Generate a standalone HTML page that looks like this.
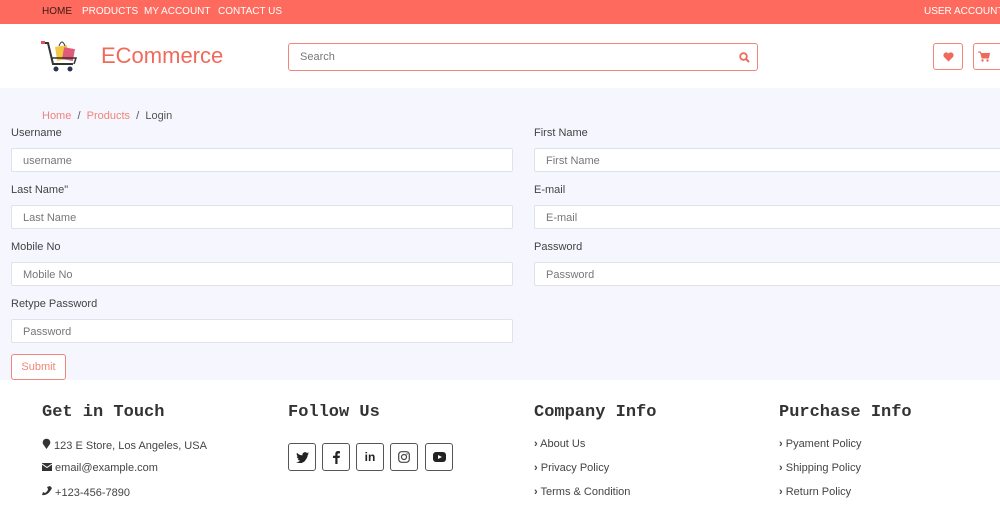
<!DOCTYPE html>
<html><head><meta charset="utf-8"><style>
*{box-sizing:border-box;margin:0;padding:0}
body{width:1000px;height:506px;overflow:hidden;font-family:"Liberation Sans",sans-serif;background:#fff;color:#444;position:relative}
.a{position:absolute;white-space:nowrap}
.top{left:0;top:0;width:1000px;height:24px;background:#fe6b5e}
.top span{position:absolute;top:6px;font-size:10px;color:#fff;white-space:nowrap}
.hdr{left:0;top:24px;width:1000px;height:64px;background:#fff}
.form{left:0;top:88px;width:1000px;height:292px;background:#f5f6fe}
.lbl{font-size:11px;color:#444}
.inp{height:24px;background:#fff;border:1px solid #dfe2ea;border-radius:2px;font-size:11px;color:#777;padding:6px 0 0 11px}
.ft h3{position:absolute;top:403px;font-family:"Liberation Mono",monospace;font-weight:bold;font-size:17px;color:#333}
.fi{font-size:11px;color:#444}
.sb{width:28px;height:28px;border:1px solid #555;border-radius:3px;top:443px;display:flex;align-items:center;justify-content:center}
</style></head><body>
<div class="a top">
<span style="left:42px;color:#3a1a16">HOME</span>
<span style="left:82px">PRODUCTS</span>
<span style="left:144px">MY ACCOUNT</span>
<span style="left:218px">CONTACT US</span>
<span style="left:924px">USER ACCOUNT</span>
</div>
<div class="a hdr"></div>
<svg class="a" style="left:41px;top:36px" width="42" height="42" viewBox="0 0 42 42">
<path d="M1 7 L7 7 L12 28 L32 28" stroke="#333" stroke-width="2" fill="none"/>
<rect x="0" y="5" width="4" height="3" fill="#e0505a"/>
<rect x="15" y="10" width="12" height="14" fill="#f3c845" transform="rotate(-8 21 17)"/>
<path d="M18 10 q3 -8 6 0" stroke="#333" fill="none"/>
<rect x="22" y="12" width="11" height="12" fill="#e05a7a" transform="rotate(10 27 18)"/>
<path d="M10 22 L35 22 L33 28" stroke="#333" stroke-width="1.5" fill="none"/>
<circle cx="15" cy="33" r="2.5" fill="#2b3550"/><circle cx="29" cy="33" r="2.5" fill="#2b3550"/>
</svg>
<div class="a" style="left:101px;top:43px;font-size:22px;color:#f06a5c">ECommerce</div>
<div class="a" style="left:288px;top:43px;width:470px;height:28px;border:1px solid #f0867b;border-radius:3px;background:#fff">
<span style="position:absolute;left:11px;top:7px;font-size:11px;color:#777">Search</span>
<svg style="position:absolute;right:7px;top:8px" width="11" height="11" viewBox="0 0 11 11"><circle cx="4.5" cy="4.5" r="3.3" stroke="#f06a5c" stroke-width="1.8" fill="none"/><path d="M7 7 L10 10" stroke="#f06a5c" stroke-width="2"/></svg>
</div>
<div class="a" style="left:933px;top:43px;width:30px;height:27px;border:1px solid #f0867b;border-radius:3px;background:#fff;display:flex;align-items:center;justify-content:center">
<svg width="11" height="10" viewBox="0 0 11 10"><path d="M5.5 9.5 L1 5 A2.5 2.5 0 0 1 5.5 1.5 A2.5 2.5 0 0 1 10 5 Z" fill="#f06a5c"/></svg></div>
<div class="a" style="left:973px;top:43px;width:30px;height:27px;border:1px solid #f0867b;border-radius:3px;background:#fff;display:flex;align-items:center;justify-content:center;padding-right:8px">
<svg width="12" height="11" viewBox="0 0 12 11"><path d="M0 1 H2.5 L4 7 H10.5 L11.5 2.5 H3" fill="#f06a5c" stroke="#f06a5c"/><circle cx="4.5" cy="9.5" r="1.2" fill="#f06a5c"/><circle cx="9.5" cy="9.5" r="1.2" fill="#f06a5c"/></svg></div>

<div class="a form"></div>
<div class="a" style="left:42px;top:110px;font-size:11px;color:#555"><span style="color:#f0857a">Home</span> &nbsp;/&nbsp; <span style="color:#f0857a">Products</span> &nbsp;/&nbsp; Login</div>

<div class="a lbl" style="left:11px;top:127px">Username</div>
<div class="a inp" style="left:11px;top:148px;width:502px">username</div>
<div class="a lbl" style="left:11px;top:184px">Last Name"</div>
<div class="a inp" style="left:11px;top:205px;width:502px">Last Name</div>
<div class="a lbl" style="left:11px;top:241px">Mobile No</div>
<div class="a inp" style="left:11px;top:262px;width:502px">Mobile No</div>
<div class="a lbl" style="left:11px;top:298px">Retype Password</div>
<div class="a inp" style="left:11px;top:319px;width:502px">Password</div>

<div class="a lbl" style="left:534px;top:127px">First Name</div>
<div class="a inp" style="left:534px;top:148px;width:480px">First Name</div>
<div class="a lbl" style="left:534px;top:184px">E-mail</div>
<div class="a inp" style="left:534px;top:205px;width:480px">E-mail</div>
<div class="a lbl" style="left:534px;top:241px">Password</div>
<div class="a inp" style="left:534px;top:262px;width:480px">Password</div>

<div class="a" style="left:11px;top:354px;width:55px;height:26px;border:1px solid #f0867b;border-radius:3px;background:#fff;font-size:11px;color:#f0857a;text-align:center;padding-top:6px">Submit</div>

<div class="ft">
<h3 style="left:42px">Get in Touch</h3>
<h3 style="left:288px">Follow Us</h3>
<h3 style="left:534px">Company Info</h3>
<h3 style="left:779px">Purchase Info</h3>
</div>
<div class="a fi" style="left:42px;top:438px">
<svg width="9" height="11" viewBox="0 0 9 11"><path d="M4.5 11 L1 6 A3.8 3.8 0 1 1 8 6 Z" fill="#333"/></svg> 123 E Store, Los Angeles, USA</div>
<div class="a fi" style="left:42px;top:462px">
<svg width="10" height="8" viewBox="0 0 10 8"><rect width="10" height="8" fill="#333"/><path d="M0 1 L5 4.5 L10 1" stroke="#fff" fill="none"/></svg> email@example.com</div>
<div class="a fi" style="left:42px;top:486px">
<svg width="10" height="10" viewBox="0 0 10 10"><path d="M8 0 L10 2 Q6 10 0 9 L1 6 L3 7 Q6 5 6 3 L5 1 Z" fill="#333"/></svg> +123-456-7890</div>

<div class="a sb" style="left:288px"><svg width="13" height="11" viewBox="0 0 13 11"><path d="M13 1.3 Q12 2 11.5 2 Q12.5 1 12.7 0.3 Q11.8 0.8 11 1 A2.7 2.7 0 0 0 6.4 3.4 Q3 3.3 1 0.8 Q0 3 2 4.5 Q1.3 4.5 0.8 4.2 Q0.9 6.3 3 6.8 Q2.3 7 1.7 6.9 Q2.3 8.6 4.2 8.7 Q2 10.3 0 10 Q8 14 11.7 4 L11.7 3 Q12.5 2.3 13 1.3Z" fill="#222"/></svg></div>
<div class="a sb" style="left:322px"><svg width="7" height="13" viewBox="0 0 7 13"><path d="M4.5 13 V7 H6.5 L7 4.7 H4.5 V3.3 Q4.5 2.4 5.5 2.4 H7 V0.3 Q6 0 5 0 Q2.3 0 2.3 3 V4.7 H0 V7 H2.3 V13Z" fill="#222"/></svg></div>
<div class="a sb" style="left:356px;font-weight:bold;font-size:12px;color:#222">in</div>
<div class="a sb" style="left:390px"><svg width="12" height="12" viewBox="0 0 12 12"><rect x="0.7" y="0.7" width="10.6" height="10.6" rx="3" stroke="#444" stroke-width="1.2" fill="none"/><circle cx="6" cy="6" r="2.5" stroke="#444" stroke-width="1.2" fill="none"/><circle cx="9" cy="3" r="0.7" fill="#444"/></svg></div>
<div class="a sb" style="left:425px"><svg width="13" height="10" viewBox="0 0 13 10"><rect width="13" height="10" rx="3" fill="#222"/><path d="M5 3 L9 5 L5 7Z" fill="#fff"/></svg></div>

<div class="a fi" style="left:534px;top:438px"><b>›</b> About Us</div>
<div class="a fi" style="left:534px;top:462px"><b>›</b> Privacy Policy</div>
<div class="a fi" style="left:534px;top:486px"><b>›</b> Terms &amp; Condition</div>
<div class="a fi" style="left:779px;top:438px"><b>›</b> Pyament Policy</div>
<div class="a fi" style="left:779px;top:462px"><b>›</b> Shipping Policy</div>
<div class="a fi" style="left:779px;top:486px"><b>›</b> Return Policy</div>
</body></html>
